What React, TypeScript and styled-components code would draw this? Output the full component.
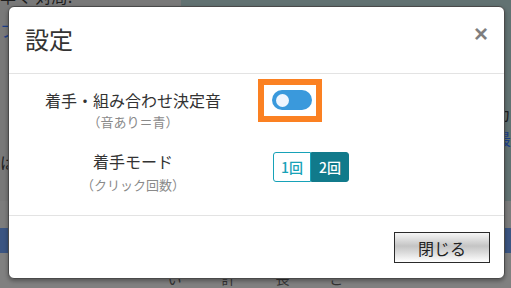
import React from "react";
import styled, { createGlobalStyle } from "styled-components";

const Global = createGlobalStyle`
  html, body { margin: 0; padding: 0; }
  body {
    width: 511px; height: 288px; overflow: hidden;
    font-family: "Noto Sans CJK JP", "Noto Sans", sans-serif;
    background: #808080;
  }
  #root { position: relative; width: 511px; height: 288px; }
`;

const Page = styled.div`
  width: 511px; height: 288px;
  display: flex; flex-direction: column;
  overflow: hidden;
`;

const TopArea = styled.div`
  height: 213px;
  display: flex;
`;

const LeftPane = styled.div`
  width: 181px;
  background: #797979;
  display: flex; flex-direction: column;
  font-size: 16px; color: #222;
  line-height: 20px;
`;

const RightPane = styled.div`
  flex: 1;
  background: #627272;
  display: flex; flex-direction: column; align-items: flex-end;
  font-size: 16px; line-height: 20px;
`;

const BgText = styled.div<{ $color?: string; $mt?: number; $ml?: number }>`
  color: ${p => p.$color ?? "#1e1e1e"};
  margin-top: ${p => p.$mt ?? 0}px;
  margin-left: ${p => p.$ml ?? 0}px;
  white-space: nowrap;
`;

const GrayStrip = styled.div`
  height: 28px;
  background: #7c7c7c;
`;

const BlueBand = styled.div`
  height: 27px;
  background: #3b5582;
`;

const BottomArea = styled.div`
  flex: 1;
  background: #808080;
  display: flex; justify-content: center;
  font-size: 14px; color: #333;
  padding-top: 15px;
  gap: 40px;
`;

const Modal = styled.div`
  position: absolute;
  left: 8px; top: 6px;
  width: 497px; height: 273px;
  box-sizing: border-box;
  background: #fff;
  border: 1px solid #4a4a4a;
  border-radius: 6px;
  box-shadow: 0 2px 4px rgba(0,0,0,0.35);
  display: flex; flex-direction: column;
  color: #333;
`;

const Header = styled.div`
  height: 67px;
  box-sizing: border-box;
  padding: 14px 16px 17px 16px;
  border-bottom: 1px solid #e3e3e3;
  display: flex; align-items: flex-start; justify-content: space-between;
`;

const Title = styled.h4`
  margin: 0;
  font-size: 24px;
  font-weight: 400;
  line-height: 36px;
  color: #333;
`;

const Close = styled.button`
  border: 0; background: transparent; padding: 0;
  margin-top: 1px;
  font-family: "Liberation Sans", Arial, sans-serif;
  font-size: 24px; font-weight: 700; line-height: 24px;
  color: #000; opacity: 0.5;
  cursor: pointer;
`;

const Body = styled.div`
  flex: 1;
  padding: 15px 0 0 15px;
  display: flex; flex-direction: column; gap: 17px;
`;

const Row = styled.div`
  display: grid;
  grid-template-columns: 218px 1fr;
  column-gap: 30px;
  align-items: start;
`;

const LabelBlock = styled.div`
  display: flex; flex-direction: column; align-items: center;
`;

const Label = styled.div`
  font-size: 16px; line-height: 22px; color: #333;
`;

const Sub = styled.div<{ $mt?: number }>`
  font-size: 13px; line-height: 22px; color: #8a8a8a;
  margin-top: ${p => p.$mt ?? 0}px;
`;

const Highlight = styled.span`
  display: inline-flex;
  justify-self: start;
  border: 6px solid #fb8122;
  padding: 5px 4px 6px 8px;
  margin: -10px 0 0 -14px;
`;

const Switch = styled.span`
  width: 40px; height: 20px;
  border-radius: 10px;
  background: #3a99dc;
  display: flex; align-items: center;
  padding-left: 4px; box-sizing: border-box;
`;

const Knob = styled.span`
  width: 13px; height: 13px; border-radius: 50%;
  background: #eef5fe;
`;

const Segment = styled.div`
  display: inline-flex;
  justify-self: start;
  margin: 2px 0 0 1px;
`;

const SegButton = styled.button<{ $active?: boolean }>`
  width: 38px; height: 30px;
  box-sizing: border-box;
  padding: 0;
  font-family: "Noto Sans CJK JP", sans-serif;
  font-size: 14px; font-weight: 500;
  border: 1px solid ${p => (p.$active ? "#117a8b" : "#17a2b8")};
  background: ${p => (p.$active ? "#117a8b" : "#fff")};
  color: ${p => (p.$active ? "#fff" : "#17a2b8")};
  &:first-child { border-radius: 3px 0 0 3px; }
  &:last-child { border-radius: 0 3px 3px 0; }
`;

const Footer = styled.div`
  height: 63px;
  box-sizing: border-box;
  border-top: 1px solid #e3e3e3;
  padding: 16px 14px 15px 0;
  display: flex; justify-content: flex-end; align-items: flex-start;
`;

const CloseButton = styled.button`
  width: 96px; height: 31px;
  box-sizing: border-box;
  border: 1px solid #2a2a2a;
  background: linear-gradient(#f6f6f6 0%, #c4c4c4 45%, #d8d8d8 65%, #ffffff 100%);
  font-family: "Noto Sans CJK JP", sans-serif;
  font-size: 16px; line-height: 20px;
  color: #222;
  padding: 0;
`;

export default function App() {
  return (
    <>
      <Global />
      <Page>
        <TopArea>
          <LeftPane>
            <BgText $mt={-14}>準ぐ 対局!</BgText>
            <BgText $color="#1c3f8a" $mt={14}>フ</BgText>
            <BgText $mt={112}>は</BgText>
          </LeftPane>
          <RightPane>
            <BgText $mt={104}>カ</BgText>
            <BgText $color="#1c3f8a" $mt={4}>最</BgText>
          </RightPane>
        </TopArea>
        <GrayStrip />
        <BlueBand />
        <BottomArea>
          <span>い</span>
          <span>計</span>
          <span>長</span>
          <span>ご</span>
        </BottomArea>
      </Page>
      <Modal>
        <Header>
          <Title>設定</Title>
          <Close aria-label="close">×</Close>
        </Header>
        <Body>
          <Row>
            <LabelBlock>
              <Label>着手・組み合わせ決定音</Label>
              <Sub>（音あり＝青）</Sub>
            </LabelBlock>
            <Highlight>
              <Switch>
                <Knob />
              </Switch>
            </Highlight>
          </Row>
          <Row>
            <LabelBlock>
              <Label>着手モード</Label>
              <Sub $mt={2}>（クリック回数）</Sub>
            </LabelBlock>
            <Segment>
              <SegButton>1回</SegButton>
              <SegButton $active>2回</SegButton>
            </Segment>
          </Row>
        </Body>
        <Footer>
          <CloseButton>閉じる</CloseButton>
        </Footer>
      </Modal>
    </>
  );
}
